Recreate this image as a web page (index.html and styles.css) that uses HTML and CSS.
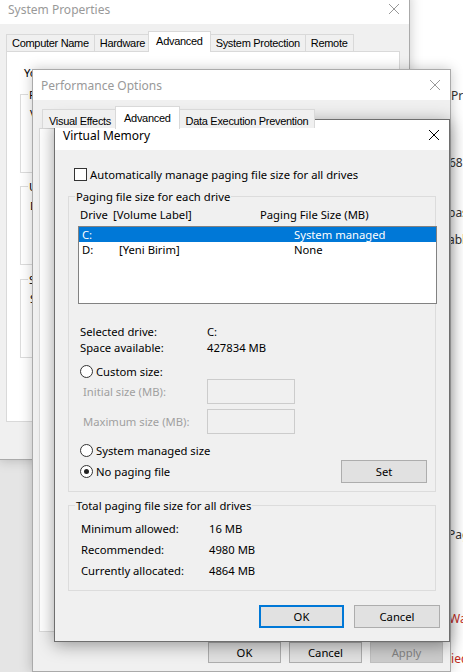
FILE: index.html
```html
<!DOCTYPE html>
<html lang="en">
<head>
    <meta charset="UTF-8">
    <meta name="viewport" content="width=device-width, initial-scale=1.0">
    <title>Virtual Memory</title>
    <link rel="stylesheet" href="styles.css">
</head>
<body>
<div class="desktop">

    <!-- window peeking out on the right, behind the dialogs -->
    <div class="peek">
        <div class="peek-line peek-1">Processor</div>
        <div class="peek-line peek-2">68 GB</div>
        <div class="peek-line peek-3">base</div>
        <div class="peek-line peek-4">able</div>
        <div class="peek-line peek-5">Page</div>
        <div class="peek-line peek-6 red">Warning</div>
        <div class="peek-line peek-7 red">lied</div>
    </div>
    <div class="shade-left"></div>

    <!-- System Properties -->
    <section class="window win-sys inactive">
        <header class="titlebar">
            <span class="title">System Properties</span>
            <span class="close"><svg width="10" height="10" viewBox="0 0 10 10"><path d="M0 0L10 10M10 0L0 10"/></svg></span>
        </header>
        <div class="tabs tabs-sys">
            <div class="tab">Computer Name</div>
            <div class="tab">Hardware</div>
            <div class="tab active">Advanced</div>
            <div class="tab">System Protection</div>
            <div class="tab">Remote</div>
        </div>
        <div class="sys-panel">
            <div class="intro">You must be logged on as an Administrator to make most of these changes.</div>
            <fieldset class="sys-group first">
                <legend>Performance</legend>
                <div class="sys-text">Visual effects, processor scheduling, memory usage, and virtual memory</div>
            </fieldset>
            <fieldset class="sys-group">
                <legend>User Profiles</legend>
                <div class="sys-text">Desktop settings related to your sign-in</div>
            </fieldset>
            <fieldset class="sys-group third">
                <legend>Startup and Recovery</legend>
                <div class="sys-text">System startup, system failure, and debugging information</div>
            </fieldset>
        </div>
    </section>

    <!-- Performance Options -->
    <section class="window win-perf inactive">
        <header class="titlebar">
            <span class="title">Performance Options</span>
            <span class="close"><svg width="10" height="10" viewBox="0 0 10 10"><path d="M0 0L10 10M10 0L0 10"/></svg></span>
        </header>
        <div class="tabs tabs-perf">
            <div class="tab">Visual Effects</div>
            <div class="tab active">Advanced</div>
            <div class="tab">Data Execution Prevention</div>
        </div>
        <div class="perf-panel"></div>
        <div class="perf-buttons">
            <button class="btn btn-small">OK</button>
            <button class="btn btn-small">Cancel</button>
            <button class="btn btn-small disabled">Apply</button>
        </div>
    </section>

    <!-- Virtual Memory -->
    <section class="window win-vm">
        <header class="titlebar">
            <span class="title">Virtual Memory</span>
            <span class="close"><svg width="10" height="10" viewBox="0 0 10 10"><path d="M0 0L10 10M10 0L0 10"/></svg></span>
        </header>
        <div class="vm-body">
            <div class="check-row">
                <span class="checkbox"></span>
                <span>Automatically manage paging file size for all drives</span>
            </div>

            <fieldset class="group">
                <legend>Paging file size for each drive</legend>
                <div class="col-head">
                    <span class="h-drive">Drive</span>
                    <span class="h-label">[Volume Label]</span>
                    <span>Paging File Size (MB)</span>
                </div>
                <div class="drive-list">
                    <div class="drive-row selected">
                        <span class="c-drive">C:</span>
                        <span class="c-label"></span>
                        <span>System managed</span>
                    </div>
                    <div class="drive-row">
                        <span class="c-drive">D:</span>
                        <span class="c-label">[Yeni Birim]</span>
                        <span>None</span>
                    </div>
                </div>

                <div class="drive-info">
                    <div class="info-row"><span class="info-label">Selected drive:</span><span>C:</span></div>
                    <div class="info-row"><span class="info-label">Space available:</span><span>427834 MB</span></div>
                </div>

                <div class="radio-row custom">
                    <span class="radio"></span>
                    <span>Custom size:</span>
                </div>
                <div class="size-row first">
                    <span class="size-label">Initial size (MB):</span>
                    <span class="size-input"></span>
                </div>
                <div class="size-row second">
                    <span class="size-label">Maximum size (MB):</span>
                    <span class="size-input"></span>
                </div>
                <div class="radio-row managed">
                    <span class="radio"></span>
                    <span>System managed size</span>
                </div>
                <div class="last-row">
                    <div class="radio-inline">
                        <span class="radio checked"></span>
                        <span>No paging file</span>
                    </div>
                    <button class="btn btn-set">Set</button>
                </div>
            </fieldset>

            <fieldset class="group totals">
                <legend>Total paging file size for all drives</legend>
                <div class="total-rows">
                    <div class="total-row"><span class="total-label">Minimum allowed:</span><span>16 MB</span></div>
                    <div class="total-row"><span class="total-label">Recommended:</span><span>4980 MB</span></div>
                    <div class="total-row"><span class="total-label">Currently allocated:</span><span>4864 MB</span></div>
                </div>
            </fieldset>

            <div class="vm-buttons">
                <button class="btn btn-ok default">OK</button>
                <button class="btn btn-cancel">Cancel</button>
            </div>
        </div>
    </section>

</div>
</body>
</html>
```

FILE: styles.css
```css
* { box-sizing: border-box; }
body {
    margin: 0;
    font-family: "Segoe UI", "Noto Sans", sans-serif;
    font-size: 11.25px;
    line-height: 15px;
    color: #000;
}
.desktop {
    position: relative;
    width: 463px;
    height: 672px;
    overflow: hidden;
    background: #fff;
}

/* background window on the right */
.peek {
    position: absolute;
    left: 420px;
    top: 0;
    width: 60px;
    height: 672px;
    padding-left: 28px;
    background: #fff;
    color: #333;
    white-space: nowrap;
    font-size: 12px;
}
.peek-line { height: 15px; }
.peek-line.red { color: #c42b1c; }
.peek-1 { margin: 88px 0 0 3px; }
.peek-2 { margin: 52px 0 0 1px; }
.peek-3 { margin-top: 35px; }
.peek-4 { margin-top: 12px; }
.peek-5 { margin-top: 280px; }
.peek-6 { margin: 69px 0 0 1px; }
.peek-7 { margin-top: 25px; }

.shade-left {
    position: absolute;
    left: 0;
    top: 460px;
    width: 40px;
    height: 212px;
    background: #e5e5e5;
}

/* windows */
.window {
    position: absolute;
    display: flex;
    flex-direction: column;
    background: #f0f0f0;
    border: 1px solid #aaa;
    box-shadow: 0 0 12px rgba(0,0,0,0.22);
}
.win-sys { left: -1px; top: -7px; width: 411px; height: 467px; }
.win-perf { left: 32px; top: 69px; width: 419px; }
.win-vm {
    left: 54px;
    top: 119px;
    width: 396px;
    border-color: #6e6e6e;
    box-shadow: 0 3px 16px rgba(0,0,0,0.38);
}

.titlebar {
    flex-shrink: 0;
    height: 30px;
    display: flex;
    align-items: center;
    padding-left: 8px;
    background: #fff;
    font-size: 12px;
}
.inactive .titlebar { color: #999; }
.close {
    margin-left: auto;
    width: 30px;
    height: 30px;
    display: flex;
    align-items: center;
    justify-content: center;
}
.close svg { stroke: currentColor; stroke-width: 1; fill: none; }

/* tabs */
.tabs {
    display: flex;
    align-items: flex-end;
    position: relative;
    z-index: 1;
    font-family: "Liberation Sans", Arial, sans-serif;
    font-size: 11px;
    letter-spacing: -0.3px;
}
.tabs-sys { height: 27px; padding-left: 6px; }
.tabs-perf { height: 28px; padding-left: 9px; }
.tab {
    height: 17px;
    line-height: 17px;
    padding: 0 5px;
    border: 1px solid #d9d9d9;
    border-bottom: 0;
    margin-right: -1px;
    background: #f0f0f0;
    white-space: nowrap;
}
.tab.active {
    height: 21px;
    line-height: 19px;
    margin: 0 -1px -1px -2px;
    padding: 0 7px;
    background: #fff;
    position: relative;
}
.tabs-perf .tab { height: 19px; line-height: 22px; padding: 0 6px; }
.tabs-perf .tab.active { height: 23px; line-height: 22px; padding: 0 8px; }

.sys-panel {
    height: 371px;
    margin: 0 9px 0 6px;
    padding: 13px 13px 0;
    background: #fff;
    border: 1px solid #d9d9d9;
    white-space: nowrap;
    overflow: hidden;
}
.intro { padding-left: 4px; }
.sys-group {
    height: 86px;
    margin: 6px 0 0;
    padding: 0;
    min-width: 0;
    border: 1px solid #dcdcdc;
}
.sys-group.first { margin-top: 7px; }
.sys-group.third { margin-top: 7px; }
.sys-group legend { margin-left: 7px; padding: 0 1px; }
.sys-text { margin-top: 4px; padding-left: 9px; }

.perf-panel {
    height: 504px;
    margin: 0 6px;
    background: #fff;
    border: 1px solid #d9d9d9;
}
.perf-buttons {
    display: flex;
    justify-content: flex-end;
    gap: 8px;
    margin: 10px 7px 8px;
}

/* buttons */
.btn {
    font: inherit;
    color: #000;
    background: #e1e1e1;
    border: 1px solid #adadad;
    padding: 0;
    display: flex;
    align-items: center;
    justify-content: center;
}
.btn-small { width: 73px; height: 21px; }
.btn.disabled { background: #cccccc; border-color: #bfbfbf; color: #838383; }
.btn-set { width: 86px; height: 23px; }
.btn-ok { width: 85px; height: 23px; }
.btn-cancel { width: 86px; height: 23px; }
.btn.default { border: 2px solid #0078d7; }

/* virtual memory */
.vm-body { padding: 18px 13px 13px; }
.check-row {
    display: flex;
    align-items: center;
    gap: 3px;
    height: 13px;
    margin-left: 6px;
}
.checkbox {
    width: 13px;
    height: 13px;
    border: 1px solid #333;
    background: #fff;
}

.group {
    margin: 8px 0 0;
    padding: 0 0 8px;
    min-width: 0;
    border: 1px solid #dcdcdc;
}
.group legend { margin-left: 6px; padding: 0 1px; }
.group.totals { margin-top: 6px; }

.col-head {
    display: flex;
    align-items: center;
    height: 16px;
    margin: 2px 0 0 11px;
}
.h-drive { width: 33px; }
.h-label { width: 147px; }

.drive-list {
    height: 78px;
    margin: 4px -2px 0 9px;
    background: #fff;
    border: 1px solid #828282;
}
.drive-row {
    display: flex;
    align-items: center;
    height: 15px;
    padding-left: 3px;
}
.drive-row.selected { background: #0078d7; color: #fff; }
.c-drive { width: 37px; }
.c-label { width: 175px; }

.drive-info { margin: 19px 0 0 11px; }
.info-row { display: flex; align-items: center; height: 16px; }
.info-label { width: 127px; }

.radio-row {
    display: flex;
    align-items: center;
    gap: 3px;
    height: 13px;
    margin: 10px 0 0 11px;
}
.radio-inline { display: flex; align-items: center; gap: 3px; }
.radio {
    width: 13px;
    height: 13px;
    border: 1px solid #333;
    border-radius: 50%;
    background: #fff;
    display: flex;
    align-items: center;
    justify-content: center;
}
.radio.checked::after {
    content: "";
    width: 5px;
    height: 5px;
    border-radius: 50%;
    background: #222;
}

.size-row {
    display: flex;
    align-items: center;
    margin-left: 14px;
    color: #a0a0a0;
}
.size-row.first { margin-top: 1px; }
.size-row.second { margin-top: 5px; }
.size-label { width: 124px; }
.size-input {
    width: 88px;
    height: 25px;
    border: 1px solid #cccccc;
    background: #f0f0f0;
}

.last-row {
    display: flex;
    align-items: center;
    justify-content: space-between;
    height: 23px;
    margin: 3px 8px 0 11px;
}

.total-rows { margin: 5px 0 1px 12px; }
.total-row { display: flex; align-items: center; height: 21px; }
.total-label { width: 128px; }

.vm-buttons {
    display: flex;
    justify-content: flex-end;
    gap: 10px;
    margin: 14px -4px 0 0;
}
```
